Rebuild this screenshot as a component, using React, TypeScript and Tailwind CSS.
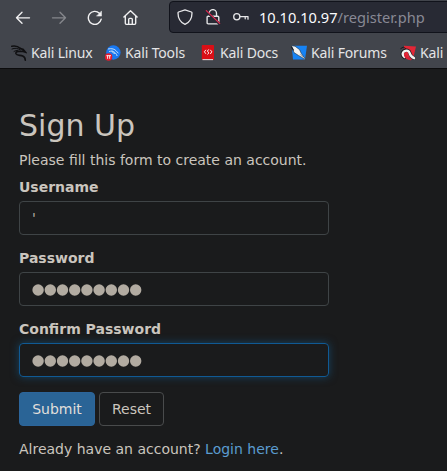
import type { ReactNode } from 'react';

function Field({ label, focused, children }: { label: string; focused?: boolean; children: ReactNode }) {
  return (
    <div className="mb-[15px]">
      <label className="mb-[5px] block h-[17px] font-bold leading-[17px]">{label}</label>
      <div
        className={
          'flex h-[34px] w-full items-center rounded border px-3 text-[#b2aba1] ' +
          (focused ? 'border-[#105a94] shadow-[0_0_8px_rgba(20,94,145,0.6)]' : 'border-[#3f4446]')
        }
      >
        {children}
      </div>
    </div>
  );
}

function Dots() {
  return (
    <svg viewBox="0 0 112 12" className="mt-0.5 h-3 w-28" fill="#b2aba1">
      {Array.from({ length: 9 }, (_, i) => (
        <circle key={i} cx={6.1 + i * 12.2} cy="6" r="5.7" />
      ))}
    </svg>
  );
}

function Dragon({ className }: { className: string }) {
  return (
    <svg viewBox="0 0 16 16" className={className} fill="none" stroke="currentColor" strokeLinecap="round">
      <path d="M.8 1.3C4 .6 7.2 1.5 9.5 3.7L12 4.2l2.5 3-2.3-.7-3-.2C6.5 6.3 4.5 6.8 5 8.7c.6 1.8 4.2 1.4 6.7 2.4 1.8.8 2.5 2.2 2.6 4" strokeWidth="1.6" />
      <path d="M1 4c3-1.2 5.6-.9 8 .8M3 6.5c1.4-.8 2.4-1.1 4-1.1M10 3l2 2.7" strokeWidth="1" />
    </svg>
  );
}

function Bookmark({ icon, children, className }: { icon: ReactNode; children: ReactNode; className: string }) {
  return (
    <div className={'flex shrink-0 items-center gap-1 ' + className}>
      {icon}
      <span className="whitespace-nowrap">{children}</span>
    </div>
  );
}

export default function App() {
  return (
    <div className="h-[471px] w-[447px] overflow-hidden bg-[#1a1b1c] font-['DejaVu_Sans',sans-serif] text-sm text-[#cac5be]">
      <header className="h-[69px] overflow-hidden border-b border-[#0c0c0d] bg-[#42454c] font-['Noto_Sans',sans-serif] text-[#e4e4e6]">
        <div className="flex h-[34px] items-start">
          <nav className="flex w-[169px] shrink-0 gap-5 pl-[15px] pt-[10px]">
            <svg viewBox="0 0 16 16" className="size-4" fill="none" stroke="#f1f1f2" strokeWidth="1.35" strokeLinecap="round" strokeLinejoin="round">
              <path d="M14.5 7.8H1.5M7 2.3 1.5 7.8 7 13.3" />
            </svg>
            <svg viewBox="0 0 16 16" className="size-4" fill="none" stroke="#85878c" strokeWidth="1.35" strokeLinecap="round" strokeLinejoin="round">
              <path d="M1.5 7.8h13M9 2.3l5.5 5.5L9 13.3" />
            </svg>
            <svg viewBox="0 0 16 16" className="size-4" fill="none" stroke="#f1f1f2" strokeWidth="1.4" strokeLinecap="round" strokeLinejoin="round">
              <path d="M14.2 9.2A6.5 6.5 0 1 1 12.4 3.2" />
              <path d="M14.5 1.3v4.8H9.8z" fill="#f1f1f2" strokeWidth=".5" />
            </svg>
            <svg viewBox="0 0 16 16" className="size-4" fill="none" stroke="#f1f1f2" strokeWidth="1.35" strokeLinecap="round" strokeLinejoin="round">
              <path d="M.9 7.1 7.5 .8l6.6 6.3M2.3 6.1v7.2c0 .7.4 1.1 1.1 1.1h8.2c.7 0 1.1-.4 1.1-1.1V6.1M5.7 14.2V9.3c0-.6.4-1 1-1h1.6c.6 0 1 .4 1 1v4.9" />
            </svg>
          </nav>
          <div className="mt-px flex h-8 w-[290px] shrink-0 items-center rounded border border-[#11131b] bg-[#282a34] pl-[7px] text-[14.6px]">
            <svg viewBox="0 0 16 16" className="mr-3 size-4 shrink-0" fill="none" stroke="#e7e7e9" strokeWidth="1.3" strokeLinejoin="round">
              <path d="M8 .8 14.4 3c.4.2.6.5.6.9 0 5.2-2.5 9.4-7 11.4C3.5 13.3 1 9.1 1 3.9c0-.4.2-.7.6-.9z" />
            </svg>
            <svg viewBox="0 0 16 16" className="mr-3 size-4 shrink-0" fill="none" strokeLinecap="round" strokeLinejoin="round">
              <path d="M4.3 7V4.2a3.6 3.6 0 0 1 7.2 0V7M3.2 7.2h9.5c.7 0 1.1.4 1.1 1.1v5.5c0 .7-.4 1.1-1.1 1.1H3.2c-.7 0-1.1-.4-1.1-1.1V8.3c0-.7.4-1.1 1.1-1.1z" stroke="#e7e7e9" strokeWidth="1.35" />
              <path d="M1.3 2.3 14.7 15" stroke="#282a34" strokeWidth="2.5" />
              <path d="M1.3 1.6 14.7 14.4" stroke="#e22850" strokeWidth="1.25" />
            </svg>
            <svg viewBox="0 0 16 16" className="mr-[10px] size-4 shrink-0" fill="none" stroke="#e7e7e9" strokeWidth="1.25" strokeLinecap="round" strokeLinejoin="round">
              <circle cx="3.8" cy="7.7" r="3.1" />
              <path d="M7 7.5h8v2.7M12.2 7.6v2.2" />
            </svg>
            <span className="whitespace-nowrap text-[#fbfbfe]">10.10.10.97<span className="text-[#888994]">/register.php</span></span>
          </div>
        </div>
        <div className="flex h-9 items-center pl-[11px] pt-px text-sm tracking-[-0.15px]">
          <Bookmark className="w-[94px]" icon={<Dragon className="size-4 shrink-0 text-[#101012]" />}>Kali Linux</Bookmark>
          <Bookmark className="w-[95px]" icon={
            <svg viewBox="0 0 16 16" className="size-4 shrink-0">
              <circle cx="8.4" cy="7.5" r="7.2" fill="#1878f2" />
              <path d="M3 4c4-.8 6.7 0 8.4 2.1l2 2.2M4 6.5c3.7-1 6.5.3 8.2 4.5M7 5.5c0 2 1 2.6 3.6 3" fill="none" stroke="#c5def8" strokeWidth="1" />
              <circle cx="3.6" cy="12" r="3.7" fill="#e51b2d" />
              <path d="M1.4 10.7h4.6M2.6 10.7v3.1M4.7 10.7v3.1" fill="none" stroke="white" strokeWidth=".9" />
            </svg>
          }>Kali Tools</Bookmark>
          <Bookmark className="w-[91px]" icon={
            <svg viewBox="0 0 16 16" className="size-4 shrink-0">
              <path d="M3 0h10c.6 0 1 .4 1 1v14H3c-1 0-1.2-.6-1.2-1.2V1.3C1.8.5 2.3 0 3 0z" fill="#d90f16" />
              <path d="M2.5 14.6H13" stroke="#e1d3d3" strokeWidth="1.1" />
              <path d="M5.9 4.8 4.4 6.8l1.5 2M10.3 4.8l1.5 2-1.5 2.2M8.9 4.6 7.2 6l1.8 1.8-1.6 1.6" fill="none" stroke="white" strokeWidth=".95" />
            </svg>
          }>Kali Docs</Bookmark>
          <Bookmark className="w-[109px]" icon={
            <svg viewBox="0 0 16 16" className="size-4 shrink-0">
              <path d="M.8.8H16L14 14.6H2z" fill="#1683f5" />
              <path d="M.2.7 4 1.2l4.6 3.5 1.8 4 4.6 6.2-7.4-4.4L3 7.6z" fill="#f2f2f1" stroke="#25303b" strokeWidth=".6" />
              <path d="m.4 1.5 2.2 4" stroke="#171a20" strokeWidth="1.2" />
              <path d="m9 9.2 3 3" stroke="#777e86" strokeWidth=".7" />
            </svg>
          }>Kali Forums</Bookmark>
          <Bookmark className="" icon={
            <svg viewBox="0 0 16 16" className="size-4 shrink-0" fill="none" strokeLinecap="round">
              <path d="M4 .8 16 1.5 13.5 12 4 13.5z" fill="#e32636" />
              <path d="M4.5 12.5C1.8 11 1.3 7.7 4 6c3-1.8 5.5-.5 6 2.2.4 2.5 2 4 4 5" stroke="#18191c" strokeWidth="3.3" />
              <path d="M4.3 11.9C2.2 10.3 2 7.6 4.3 6.2c2.6-1.4 4.9-.2 5.4 2.1.5 2.4 2 3.8 4.4 4.9" stroke="#f2f1f1" strokeWidth="2.4" />
              <path d="M5 10.7c1 2.3 3.4 3.5 5.7 3.6" stroke="#d91e33" strokeWidth="2" />
              <path d="m.8 3.6 2.4-1.4 2.3 1.2" stroke="#18191c" />
            </svg>
          }>Kali</Bookmark>
        </div>
      </header>
      <main className="ml-[-1px] w-[350px] px-5 pt-10">
        <h2 className="mb-[10px] h-[33px] text-[30px] leading-[33px]">Sign Up</h2>
        <p className="mb-[10px] h-[17px] leading-[17px]">Please fill this form to create an account.</p>
        <form>
          <Field label="Username">'</Field>
          <Field label="Password"><Dots /></Field>
          <Field label="Confirm Password" focused><Dots /></Field>
          <div className="mb-[15px] flex gap-1">
            <button type="button" className="h-[34px] w-[76px] rounded border border-[#2c659b] bg-[#2a6496] text-[#e1dfdb]">Submit</button>
            <button type="button" className="h-[34px] w-[65px] rounded border border-[#494b4c]">Reset</button>
          </div>
          <p className="h-[17px] whitespace-nowrap leading-[17px]">Already have an account? <a className="text-[#5b9bd0]">Login here</a>.</p>
        </form>
      </main>
    </div>
  );
}
